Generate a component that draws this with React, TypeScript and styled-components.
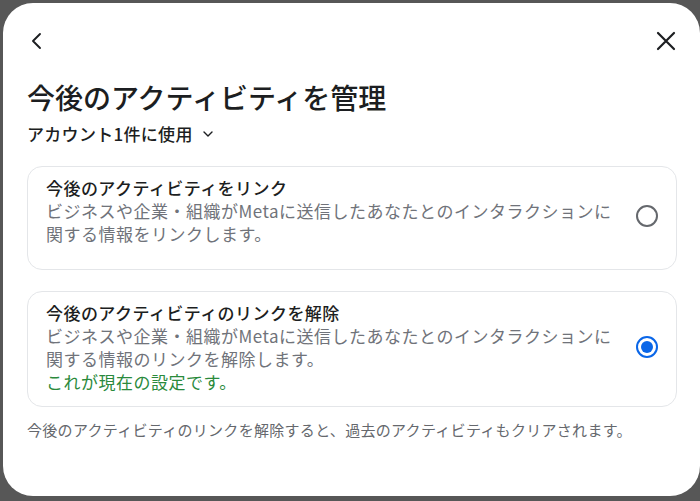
import React from "react";
import styled, { createGlobalStyle } from "styled-components";

const Global = createGlobalStyle`
  html, body { margin: 0; padding: 0; background: #575757; }
  body { font-family: "Noto Sans CJK JP", "Noto Sans", sans-serif; }
  #root { padding: 3px 0 0 3px; }
`;

const Modal = styled.div`
  width: 697px;
  height: 493px;
  box-sizing: border-box;
  background: #ffffff;
  border-radius: 30px;
  padding: 22px 23px 0 24px;
  display: flex;
  flex-direction: column;
  color: #1c1e21;
`;

const TopBar = styled.div`
  display: flex;
  justify-content: space-between;
  align-items: center;
  height: 32px;
`;

const IconButton = styled.button<{ $end?: boolean }>`
  border: none;
  background: none;
  padding: 0;
  width: 32px;
  height: 32px;
  display: flex;
  align-items: center;
  justify-content: ${(p) => (p.$end ? "flex-end" : "flex-start")};
  color: #1c1e21;
  cursor: pointer;
`;

const Title = styled.h1`
  margin: 22px 0 0;
  font-size: 28px;
  line-height: 37px;
  font-weight: 500;
  letter-spacing: 0;
`;

const AccountSelect = styled.div`
  margin-top: 6px;
  display: flex;
  align-items: center;
  gap: 9px;
  font-size: 17px;
  line-height: 24px;
  font-weight: 500;
  letter-spacing: 0.3px;
`;

const Options = styled.div`
  margin-top: 20px;
  display: flex;
  flex-direction: column;
  gap: 21px;
`;

const Card = styled.div<{ $minH?: number }>`
  min-height: ${(p) => p.$minH ?? 0}px;
  box-sizing: border-box;
  border: 1px solid #e4e6e9;
  border-radius: 15px;
  padding: 9px 18px 13px 18px;
  display: flex;
  align-items: center;
  gap: 16px;
`;

const CardText = styled.div`
  flex: 1;
  align-self: flex-start;
  display: flex;
  flex-direction: column;
`;

const CardTitle = styled.div`
  font-size: 17px;
  line-height: 23px;
  font-weight: 500;
  color: #1c1e21;
  letter-spacing: 0.45px;
`;

const CardDesc = styled.div`
  font-size: 17px;
  line-height: 23px;
  color: #70737a;
  letter-spacing: 0.5px;
`;

const Current = styled.div`
  font-size: 17px;
  line-height: 23px;
  color: #2a8a3c;
  letter-spacing: 0.5px;
`;

const Radio = styled.div<{ $checked?: boolean }>`
  width: 22px;
  height: 22px;
  box-sizing: border-box;
  border-radius: 50%;
  border: 2px solid ${(p) => (p.$checked ? "#0a66e8" : "#65686d")};
  display: flex;
  align-items: center;
  justify-content: center;
  flex-shrink: 0;
  &::after {
    content: "";
    display: ${(p) => (p.$checked ? "block" : "none")};
    width: 12px;
    height: 12px;
    border-radius: 50%;
    background: #0a66e8;
  }
`;

const Footnote = styled.p`
  margin: 12px 0 0;
  font-size: 15px;
  line-height: 22px;
  color: #65686d;
  letter-spacing: 0.3px;
`;

export default function App() {
  return (
    <>
      <Global />
      <Modal>
        <TopBar>
          <IconButton aria-label="戻る">
            <svg width="20" height="20" viewBox="0 0 20 20" fill="none">
              <path d="M13 3 L6 10 L13 17" stroke="#1c1e21" strokeWidth="1.9" strokeLinecap="round" strokeLinejoin="round" />
            </svg>
          </IconButton>
          <IconButton $end aria-label="閉じる">
            <svg width="22" height="22" viewBox="0 0 22 22" fill="none">
              <path d="M3 3 L19 19 M19 3 L3 19" stroke="#1c1e21" strokeWidth="2.2" strokeLinecap="round" />
            </svg>
          </IconButton>
        </TopBar>
        <Title>今後のアクティビティを管理</Title>
        <AccountSelect>
          アカウント1件に使用
          <svg width="12" height="12" viewBox="0 0 12 12" fill="none">
            <path d="M2 4 L6 8 L10 4" stroke="#1c1e21" strokeWidth="1.4" strokeLinecap="round" strokeLinejoin="round" />
          </svg>
        </AccountSelect>
        <Options>
          <Card $minH={104}>
            <CardText>
              <CardTitle>今後のアクティビティをリンク</CardTitle>
              <CardDesc>ビジネスや企業・組織がMetaに送信したあなたとのインタラクションに関する情報をリンクします。</CardDesc>
            </CardText>
            <Radio />
          </Card>
          <Card>
            <CardText>
              <CardTitle>今後のアクティビティのリンクを解除</CardTitle>
              <CardDesc>ビジネスや企業・組織がMetaに送信したあなたとのインタラクションに関する情報のリンクを解除します。</CardDesc>
              <Current>これが現在の設定です。</Current>
            </CardText>
            <Radio $checked />
          </Card>
        </Options>
        <Footnote>今後のアクティビティのリンクを解除すると、過去のアクティビティもクリアされます。</Footnote>
      </Modal>
    </>
  );
}
